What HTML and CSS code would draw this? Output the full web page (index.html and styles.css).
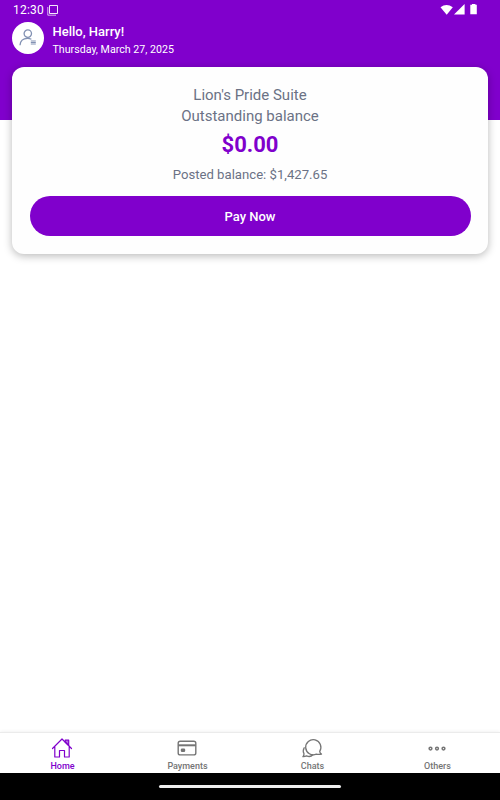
FILE: index.html
```html
<!DOCTYPE html>
<html lang="en">
<head>
    <meta charset="UTF-8">
    <meta name="viewport" content="width=device-width, initial-scale=1.0">
    <title>Home</title>
    <link rel="stylesheet" href="styles.css">
</head>
<body>

    <header class="header">
        <div class="status-bar">
            <span class="clock">12:30</span>
            <svg class="status-app" width="12" height="12" viewBox="0 0 12 12" fill="none" stroke="#fff">
                <path d="M2.500 1.500h8v8h-8z" stroke-opacity=".9"/>
                <path d="M.8 3v8.200h8.200" stroke-opacity=".7"/>
            </svg>
            <svg class="status-icons" width="38" height="12" viewBox="0 0 38 12" fill="#fff">
                <path d="M0.5 3.2Q6.5-1.2 12.8 3.2L6.7 10.7z"/>
                <path d="M24.6 0v10.6H14z"/>
                <path d="M32 0h3.4v.8h1.4v9.4h-6.5V.8H32z"/>
            </svg>
        </div>
        <div class="profile">
            <div class="avatar">
                <svg width="18" height="18" viewBox="0 0 18 18" fill="none" stroke="#8291b3" stroke-width="1.3">
                    <circle cx="8.8" cy="4.6" r="3.7"/>
                    <path d="M1 16.2C1.3 11.8 4.4 9.3 8.5 9.3c1.500 0 2.800.4 3.900 1"/>
                    <path d="M11.800 12h5M11.800 13.500h5M11.800 15h5" stroke-width="1"/>
                </svg>
            </div>
            <div>
                <div class="greeting">Hello, Harry!</div>
                <div class="date">Thursday, March 27, 2025</div>
            </div>
        </div>
    </header>

    <main class="content">
        <section class="card">
            <p class="label">Lion's Pride Suite</p>
            <p class="label">Outstanding balance</p>
            <p class="amount">$0.00</p>
            <p class="posted">Posted balance: $1,427.65</p>
            <button class="pay-button">Pay Now</button>
        </section>
    </main>

    <nav class="tabs">
        <a class="tab active">
            <svg width="22" height="22" viewBox="0 0 22 22" fill="none" stroke="currentColor" stroke-width="1.2" stroke-linejoin="round" stroke-linecap="round">
                <path d="M1.500 11.500L11 2l9.500 9.500M3.800 10v10h4.700v-6.500h5V20h4.700V10"/>
                <path d="M14.200 3.200h3.500v5.200l-3.500-3.400z" fill="currentColor" fill-opacity=".6"/>
            </svg>
            <span>Home</span>
        </a>
        <a class="tab">
            <svg width="22" height="22" viewBox="0 0 22 22" fill="none" stroke="currentColor" stroke-width="1.4">
                <rect x="2.200" y="4.300" width="17.600" height="13.600" rx="2"/>
                <path d="M2.200 8.300h17.600" stroke-width="2"/>
                <rect x="4.800" y="11.500" width="4.400" height="3.400" rx="1.200" fill="currentColor" stroke="none"/>
            </svg>
            <span>Payments</span>
        </a>
        <a class="tab">
            <svg width="22" height="22" viewBox="0 0 22 22" fill="none" stroke="currentColor" stroke-width="1.3" stroke-linejoin="round" stroke-linecap="round">
                <path d="M18.700 14.300A7.600 7.600 0 1 0 15.300 17.200q2.500.5 5.200-.1-1.500-.9-1.800-2.800z"/>
                <path d="M3.200 10.700c-1.200 2.100-1.200 4.200-.2 6 0 1.400-.5 2.400-1.100 3 1.500.1 2.700-.3 3.700-.9 2.300 1.100 4.600.8 6.300-1"/>
            </svg>
            <span>Chats</span>
        </a>
        <a class="tab">
            <svg width="22" height="22" viewBox="0 0 22 22" fill="none" stroke="currentColor" stroke-width="1.500">
                <circle cx="4.500" cy="11.600" r="1.400"/>
                <circle cx="11" cy="11.600" r="1.400"/>
                <circle cx="17.500" cy="11.600" r="1.400"/>
            </svg>
            <span>Others</span>
        </a>
    </nav>

    <div class="gesture-bar">
        <div class="gesture-handle"></div>
    </div>

</body>
</html>
```
FILE: styles.css
```css
* {
    box-sizing: border-box;
}
body {
    margin: 0;
    height: 100vh;
    display: flex;
    flex-direction: column;
    font-family: Roboto, sans-serif;
    background-color: #ffffff;
    overflow: hidden;
}
p {
    margin: 0;
}
svg {
    display: block;
}
.header {
    height: 120px;
    flex-shrink: 0;
    background-color: #8000cc;
    color: #ffffff;
}
.status-bar {
    height: 22px;
    display: flex;
    align-items: flex-start;
    padding: 4px 22px 0 13px;
}
.clock {
    font-size: 12px;
    line-height: 13px;
    letter-spacing: 0.2px;
}
.status-app {
    margin: 0 0 0 3px;
}
.status-icons {
    margin-left: auto;
}
.profile {
    display: flex;
    gap: 9px;
    padding-left: 12px;
}
.avatar {
    width: 31.5px;
    height: 32px;
    display: flex;
    align-items: center;
    justify-content: center;
    border-radius: 50%;
    background-color: #ffffff;
}
.greeting {
    margin-top: 1px;
    font-size: 13px;
    font-weight: 500;
    line-height: 18px;
}
.date {
    font-size: 10.65px;
    line-height: 17px;
}
.content {
    flex: 1;
    margin-top: -53px;
    padding: 0 12px;
}
.card {
    height: 187px;
    padding: 18px 17.5px 0;
    border-radius: 12px;
    background-color: #fefefe;
    box-shadow: 0 2px 9px rgba(0, 0, 0, 0.28);
    text-align: center;
    color: #6b7285;
}
.label {
    font-size: 15px;
    line-height: 21px;
}
.amount {
    margin-top: 3px;
    font-size: 22px;
    font-weight: 700;
    line-height: 30px;
    color: #8000cc;
}
.posted {
    margin-top: 5px;
    font-size: 13.15px;
    line-height: 20px;
}
.pay-button {
    display: block;
    width: 100%;
    height: 40.5px;
    margin-top: 10.75px;
    border: none;
    border-radius: 21px;
    font-family: inherit;
    font-size: 13px;
    font-weight: 500;
    background-color: #8000cc;
    color: #ffffff;
}
.tabs {
    height: 41px;
    display: flex;
    border-top: 1px solid #ebebeb;
    background-color: #ffffff;
    box-shadow: 0 0 4px rgba(0, 0, 0, 0.08);
}
.tab {
    flex: 1;
    display: flex;
    flex-direction: column;
    align-items: center;
    padding-top: 4px;
    font-size: 9px;
    font-weight: 500;
    line-height: 14px;
    color: #757575;
}
.tab svg {
    margin-right: 1px;
}
.active {
    color: #8000cc;
}
.gesture-bar {
    height: 27px;
    display: flex;
    justify-content: center;
    padding-top: 12px;
    background-color: #000000;
}
.gesture-handle {
    width: 182px;
    height: 3px;
    border-radius: 2px;
    background-color: #ededed;
}
```
